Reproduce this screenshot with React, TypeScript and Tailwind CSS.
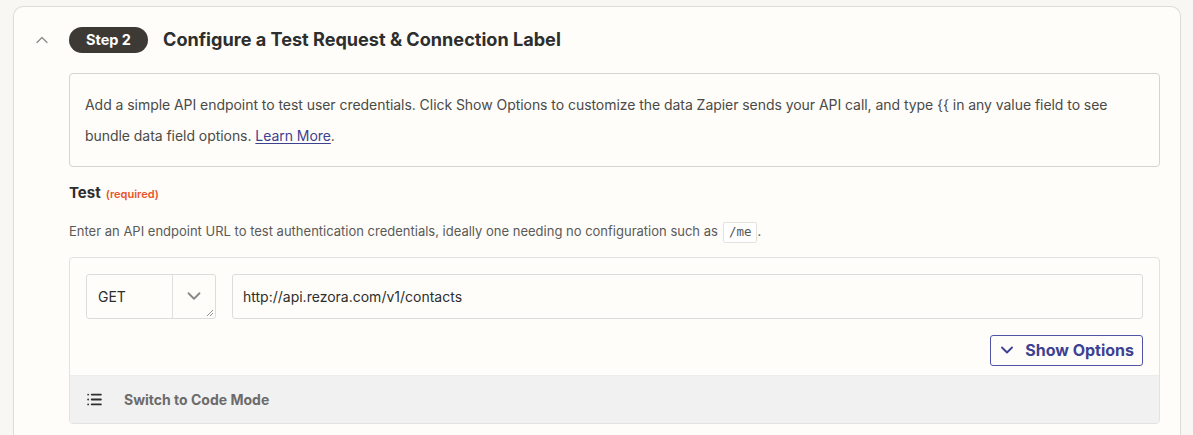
import { ChevronDown, ChevronUp, List } from 'lucide-react'

export default function App() {
  return (
    <div className="bg-[#f8f7f4] pt-[6px] pl-[13px] pr-[12px] font-['Inter',sans-serif] text-[#2d2e2e] overflow-hidden h-[435px]">
      <div className="rounded-t-[10px] border border-b-0 border-[#dedcd7] bg-[#fffdf9] h-[440px]">
        {/* Header */}
        <div className="flex items-center h-[26px] mt-[20px]">
          <div className="w-[55px] flex justify-center pl-[1px]">
            <ChevronUp className="w-[20px] h-[20px] text-[#8a8a8a]" strokeWidth={1.5} />
          </div>
          <span className="h-[26px] px-[17px] rounded-full bg-[#3d3935] text-white text-[14.5px] font-bold flex items-center">
            Step 2
          </span>
          <h2 className="ml-[15px] text-[18.1px] font-bold text-[#2d2e2e]">
            Configure a Test Request &amp; Connection Label
          </h2>
        </div>

        <div className="ml-[55px] mr-[20px] mt-[20px]">
          {/* Description */}
          <div className="rounded-[4px] border border-[#d6d4cf] px-[15px] py-[15px] text-[14px] tracking-[-0.05px] leading-[31px] text-[#4a4a48]">
            Add a simple API endpoint to test user credentials. Click Show Options to customize the data Zapier sends your API call, and type {'{{'} in any value field to see bundle data field options.{' '}
            <a href="#" className="text-[#3d4192] underline underline-offset-2">Learn More</a>.
          </div>

          {/* Test field */}
          <div className="mt-[15px] flex items-baseline gap-[5px]">
            <span className="text-[15px] font-bold text-[#2d2e2e]">Test</span>
            <span className="text-[11px] font-semibold text-[#e8542b]">(required)</span>
          </div>
          <p className="mt-[17px] text-[13px] text-[#5a5a58] flex items-center">
            Enter an API endpoint URL to test authentication credentials, ideally one needing no configuration such as
            <code className="ml-[5px] px-[5px] h-[21px] flex items-center border border-[#e4e2dd] bg-white rounded-[2px] font-['DejaVu_Sans_Mono',monospace] text-[12.5px] text-[#555]">/me</code>
            .
          </p>

          {/* Request panel */}
          <div className="mt-[14px] rounded-[4px] border border-[#e2e2e2] overflow-hidden">
            <div className="px-[16px] pt-[16px] pb-[9px]">
              <div className="flex gap-[16px]">
                <div className="relative flex w-[130px] h-[45px] rounded-[3px] border border-[#dcdcdc] bg-[#fffdf9]">
                  <div className="flex-1 flex items-center pl-[11px] text-[14px] text-[#2d2e2e]">GET</div>
                  <div className="w-[43px] border-l border-[#e0e0e0] flex items-center justify-center">
                    <ChevronDown className="w-[22px] h-[22px] text-[#888]" strokeWidth={2} />
                  </div>
                  <svg className="absolute right-[1px] bottom-[1px]" width="8" height="8" viewBox="0 0 8 8">
                    <path d="M7 1L1 7M7 4L4 7" stroke="#888" strokeWidth="0.9" fill="none" />
                  </svg>
                </div>
                <div className="flex-1 h-[45px] rounded-[3px] border border-[#dcdcdc] bg-[#fffdf9] flex items-center pl-[10px] text-[14px] text-[#2d2e2e]">
                  http://api.rezora.com/v1/contacts
                </div>
              </div>
              <div className="flex justify-end mt-[16px]">
                <button className="h-[31px] pl-[6px] pr-[8px] flex items-center gap-[8px] rounded-[3px] border border-[#4f54a8] text-[#3d4192] text-[16px] font-bold">
                  <ChevronDown className="w-[20px] h-[20px]" strokeWidth={2.25} />
                  <span>Show Options</span>
                </button>
              </div>
            </div>
            <div className="h-[48px] bg-[#f1f1f1] border-t border-[#ececec] flex items-center pl-[16px]">
              <List className="w-[17px] h-[17px] text-[#2d2e2e]" strokeWidth={2.5} />
              <span className="ml-[21px] text-[14px] font-bold text-[#6b6b6b]">Switch to Code Mode</span>
            </div>
          </div>
        </div>
      </div>
    </div>
  )
}
